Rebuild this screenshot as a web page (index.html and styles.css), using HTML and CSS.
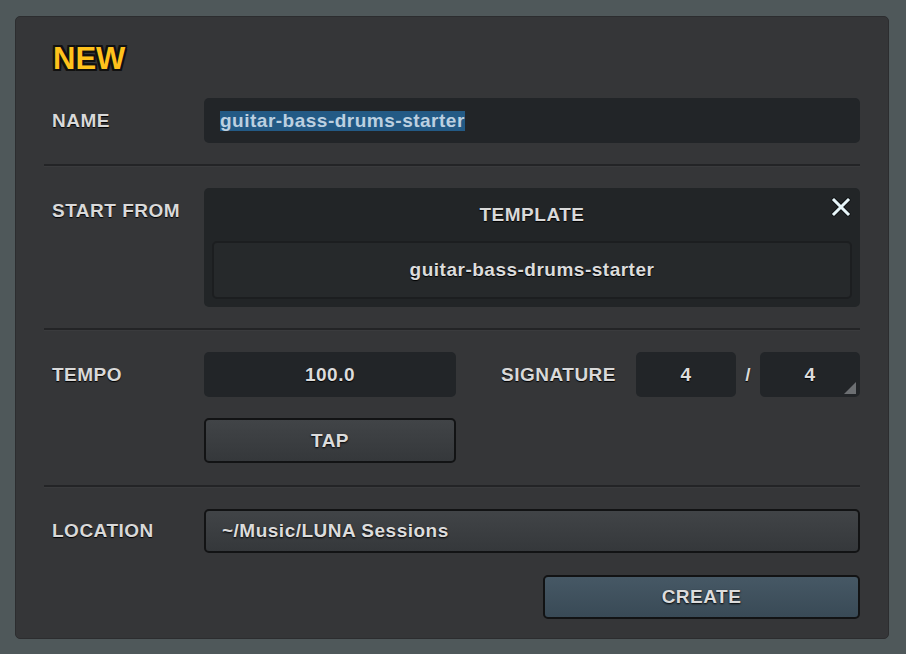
FILE: index.html
```html
<!DOCTYPE html>
<html lang="en">
<head>
  <meta charset="UTF-8" />
  <meta name="viewport" content="width=device-width, initial-scale=1.0" />
  <title>New Session</title>
  <link rel="stylesheet" href="styles.css">
</head>
<body>
  <div class="panel">
    <h1 class="title">NEW</h1>

    <div class="row">
      <div class="label">NAME</div>
      <div class="field name-field"><span class="selected">guitar-bass-drums-starter</span></div>
    </div>

    <div class="divider"></div>

    <div class="row row-top">
      <div class="label label-top">START FROM</div>
      <div class="template-box">
        <div class="template-head">TEMPLATE</div>
        <button class="close" aria-label="Close">
          <svg width="20" height="20" viewBox="0 0 20 20">
            <path d="M3 3 L17 17 M17 3 L3 17" stroke="#111416" stroke-width="5" stroke-linecap="round" />
            <path d="M3 3 L17 17 M17 3 L3 17" stroke="#e8f6fa" stroke-width="3" stroke-linecap="square" />
          </svg>
        </button>
        <div class="template-name">guitar-bass-drums-starter</div>
      </div>
    </div>

    <div class="divider"></div>

    <div class="row">
      <div class="label">TEMPO</div>
      <div class="tempo-line">
        <div class="field tempo-field">100.0</div>
        <div class="signature">
          <div class="label sig-label">SIGNATURE</div>
          <div class="field sig-field">4</div>
          <div class="slash">/</div>
          <div class="field sig-field sig-menu">4</div>
        </div>
      </div>
    </div>

    <div class="row row-tap">
      <div></div>
      <div><button class="btn tap-btn">TAP</button></div>
    </div>

    <div class="divider divider-low"></div>

    <div class="row">
      <div class="label">LOCATION</div>
      <div class="btn location">~/Music/LUNA Sessions</div>
    </div>

    <div class="actions">
      <button class="btn create-btn">CREATE</button>
    </div>
  </div>
</body>
</html>
```

FILE: styles.css
```css
* {
  margin: 0;
  padding: 0;
  box-sizing: border-box;
  font-family: 'Liberation Sans', Arial, Helvetica, sans-serif;
}

body, html {
  height: 100%;
}

body {
  background-color: #4f585a;
  padding: 16px 0 0 15px;
}

.panel {
  width: 874px;
  height: 623px;
  background-color: #353638;
  border: 1px solid #2c2d2f;
  border-radius: 5px;
  padding: 27px 28px 19px 28px;
  display: flex;
  flex-direction: column;
}

.title {
  font-size: 31px;
  line-height: 30px;
  font-weight: bold;
  color: #ffc21c;
  padding-left: 9px;
  margin-bottom: 24px;
  text-shadow:
    -2px -2px 0 #111, 2px -2px 0 #111,
    -2px 2px 0 #111, 2px 2px 0 #111,
    0 -2px 0 #111, 0 2px 0 #111, -2px 0 0 #111, 2px 0 0 #111;
}

.row {
  display: grid;
  grid-template-columns: 160px 1fr;
  align-items: center;
}

.row-top {
  align-items: start;
}

.label {
  padding-left: 8px;
  font-size: 19px;
  line-height: 22px;
  font-weight: bold;
  letter-spacing: 0.5px;
  color: #d9d9d9;
  text-shadow: 0 1px 1px #000;
}

.label-top {
  margin-top: 12px;
}

.field {
  height: 45px;
  background-color: #222528;
  border-radius: 5px;
  color: #dcdcdc;
  font-size: 19px;
  font-weight: bold;
  letter-spacing: 0.5px;
  display: flex;
  align-items: center;
  justify-content: center;
  text-shadow: 0 1px 1px #000;
}

.name-field {
  justify-content: flex-start;
  padding-left: 16px;
}

.selected {
  background-color: #235a85;
  color: #bcd0e0;
  line-height: 20px;
  text-shadow: none;
}

.divider {
  height: 3px;
  border-top: 2px solid #232426;
  border-bottom: 1px solid #3a3b3d;
  margin: 21px 0;
}

.divider-low {
  margin: 22px 0 21px;
}

.template-box {
  position: relative;
  height: 119px;
  background-color: #222527;
  border-radius: 5px;
  padding: 0 8px 8px;
}

.template-head {
  height: 53px;
  display: flex;
  align-items: center;
  justify-content: center;
  font-size: 19px;
  font-weight: bold;
  letter-spacing: 0.5px;
  color: #d9d9d9;
  text-shadow: 0 1px 1px #000;
}

.close {
  position: absolute;
  top: 8px;
  right: 8px;
  width: 22px;
  height: 22px;
  border: none;
  background: none;
  display: flex;
  align-items: center;
  justify-content: center;
  cursor: pointer;
}

.template-name {
  height: 58px;
  background-color: #26292b;
  border: 2px solid #1c1e20;
  border-radius: 5px;
  display: flex;
  align-items: center;
  justify-content: center;
  font-size: 19px;
  font-weight: bold;
  letter-spacing: 0.5px;
  color: #dcdcdc;
  text-shadow: 0 1px 1px #000;
}

.tempo-line {
  display: flex;
  justify-content: space-between;
  align-items: center;
}

.tempo-field {
  width: 252px;
}

.signature {
  display: flex;
  align-items: center;
}

.sig-label {
  padding-left: 0;
  margin-right: 20px;
}

.sig-field {
  width: 100px;
}

.sig-menu {
  position: relative;
}

.sig-menu::after {
  content: "";
  position: absolute;
  right: 4px;
  bottom: 3px;
  width: 0;
  height: 0;
  border-left: 12px solid transparent;
  border-bottom: 12px solid #6c6f72;
}

.slash {
  width: 24px;
  text-align: center;
  font-size: 19px;
  font-weight: bold;
  color: #d9d9d9;
  text-shadow: 0 1px 1px #000;
}

.row-tap {
  margin-top: 21px;
}

.btn {
  height: 45px;
  border: 2px solid #121314;
  border-radius: 5px;
  background: linear-gradient(#414447, #35383b);
  color: #dcdcdc;
  font-size: 19px;
  font-weight: bold;
  letter-spacing: 0.5px;
  text-shadow: 0 1px 2px #000;
  cursor: pointer;
}

.tap-btn {
  width: 252px;
  display: block;
}

.location {
  height: 44px;
  display: flex;
  align-items: center;
  padding-left: 16px;
  cursor: default;
}

.actions {
  margin-top: 22px;
  display: flex;
  justify-content: flex-end;
}

.create-btn {
  width: 317px;
  height: 44px;
  background: linear-gradient(#465865, #394a56);
}
```
